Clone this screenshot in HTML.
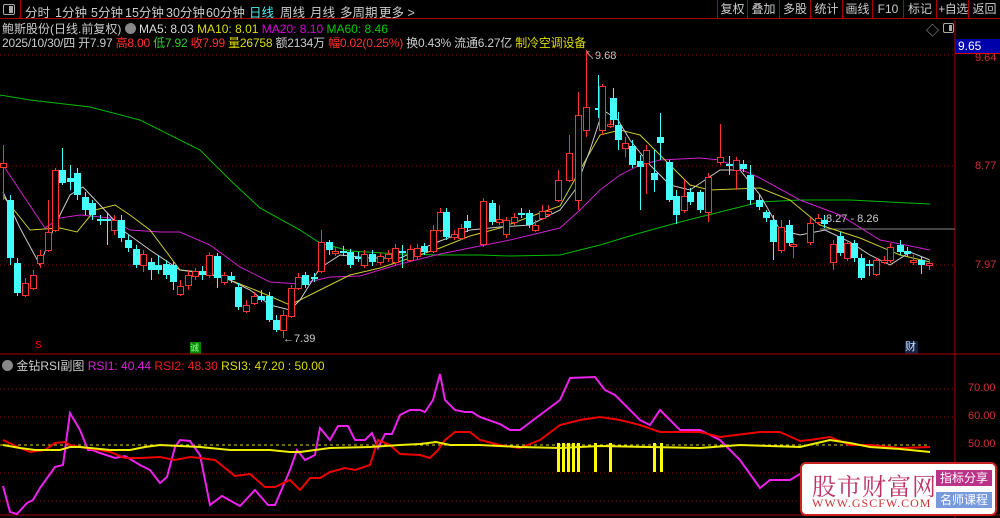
<!DOCTYPE html>
<html><head><meta charset="utf-8"><style>
*{margin:0;padding:0;box-sizing:border-box}
body{width:1000px;height:518px;background:#000;overflow:hidden;position:relative;font-family:"Liberation Sans","Noto Sans CJK SC",sans-serif;font-size:12px;color:#ccc}
.a{position:absolute;white-space:nowrap}
#tb{position:absolute;left:0;top:0;width:1000px;height:19px;border-bottom:1px solid #a00}
#tb span{position:absolute;top:2px;font-size:12.5px;color:#ccc;white-space:nowrap}
.btn{position:absolute;top:0;height:19px;border-left:1px solid #a00;color:#ccc;font-size:12px;text-align:center;line-height:19px;white-space:nowrap;overflow:hidden}
</style></head><body>
<div id="tb">
<div class="a" style="left:3px;top:4px;width:12px;height:11px;border:1px solid #aaa;border-radius:2px"><div style="position:absolute;right:1px;top:1px;width:4px;height:7px;background:#aaa"></div></div>
<div class="a" style="left:20px;top:0;width:1px;height:19px;background:#a00"></div>
<span style="left:25px">分时</span><span style="left:55px">1分钟</span><span style="left:91px">5分钟</span><span style="left:125px">15分钟</span><span style="left:166px">30分钟</span><span style="left:206px">60分钟</span><span style="left:249px;color:#5ee">日线</span><span style="left:280px">周线</span><span style="left:310px">月线</span><span style="left:340px">多周期</span><span style="left:379px">更多 &gt;</span>
<div class="btn" style="left:717px;width:30px">复权</div><div class="btn" style="left:747px;width:32px">叠加</div><div class="btn" style="left:779px;width:31px">多股</div><div class="btn" style="left:810px;width:32px">统计</div><div class="btn" style="left:842px;width:30px">画线</div><div class="btn" style="left:872px;width:31px">F10</div><div class="btn" style="left:903px;width:33px">标记</div><div class="btn" style="left:936px;width:33px;letter-spacing:-0.5px">+自选</div><div class="btn" style="left:968px;width:32px">返回</div>
</div>
<div class="a" style="left:2px;top:20px;font-size:12px"><span style="color:#ccc">鲍斯股份(日线.前复权)</span> <span style="display:inline-block;width:11px;height:11px;border-radius:50%;background:#888;vertical-align:-1px"></span> <span style="color:#ddd">MA5: 8.03</span> <span style="color:#dd0">MA10: 8.01</span> <span style="color:#d0d">MA20: 8.10</span> <span style="color:#0c0">MA60: 8.46</span></div>
<div class="a" style="left:2px;top:34px;font-size:12px;letter-spacing:-0.2px"><span>2025/10/30/四 开7.97 </span><span style="color:#f33">高8.00 </span><span style="color:#3c3">低7.92 </span><span style="color:#f33">收7.99 </span><span style="color:#dd0">量26758 </span><span>额2134万 </span><span style="color:#f33">幅0.02(0.25%) </span><span>换0.43% 流通6.27亿 </span><span style="color:#dd0">制冷空调设备</span></div>
<div class="a" style="left:926px;top:20px;color:#aaa;font-size:13px">◇</div>
<div class="a" style="left:943px;top:23px;width:11px;height:10px;border:1px solid #aaa;border-radius:2px"><div style="position:absolute;right:1px;top:1px;width:3px;height:6px;background:#aaa"></div></div>
<div class="a" style="left:955px;top:39px;width:45px;height:15px;background:#00a;border-bottom:1px solid #d00;color:#fff;font-size:12px;padding-left:3px">9.65</div>
<div class="a" style="left:975px;top:52px;color:#c33;font-size:11px">9.64</div>
<div class="a" style="left:975px;top:160px;color:#c33;font-size:11px">8.77</div>
<div class="a" style="left:975px;top:259px;color:#c33;font-size:11px">7.97</div>
<div class="a" style="left:968px;top:382px;color:#c33;font-size:11px">70.00</div>
<div class="a" style="left:968px;top:410px;color:#c33;font-size:11px">60.00</div>
<div class="a" style="left:968px;top:438px;color:#c33;font-size:11px">50.00</div>
<div class="a" style="left:2px;top:357px;font-size:12px"><span style="display:inline-block;width:11px;height:11px;border-radius:50%;background:#888;vertical-align:-1px"></span> <span>金钻RSI副图</span> <span style="color:#d2d">RSI1: 40.44</span> <span style="color:#e22">RSI2: 48.30</span> <span style="color:#dd0">RSI3: 47.20 : 50.00</span></div>
<div class="a" style="left:35px;top:340px;color:#f00;font-size:10px">S</div>
<div class="a" style="left:190px;top:342px;width:11px;height:12px;background:#080;color:#9f9;font-size:9px;line-height:12px">诚</div>
<div class="a" style="left:905px;top:341px;width:13px;height:13px;background:#124;color:#cdf;font-size:11px;line-height:13px">财</div>
<div class="a" style="left:584px;top:47px;color:#ccc;font-size:11px">↖9.68</div>
<div class="a" style="left:283px;top:333px;color:#ccc;font-size:11px">←7.39</div>
<div class="a" style="left:826px;top:213px;color:#ccc;font-size:11px">8.27 - 8.26</div>
<svg class="a" style="left:0;top:0" width="1000" height="518" id="sv">
<g stroke="#a00" stroke-width="1" stroke-dasharray="1,3"><line x1="0" y1="55" x2="955" y2="55"/><line x1="0" y1="166" x2="955" y2="166"/><line x1="0" y1="265" x2="955" y2="265"/><line x1="0" y1="389" x2="955" y2="389"/><line x1="0" y1="417" x2="955" y2="417"/><line x1="0" y1="473" x2="955" y2="473"/><line x1="0" y1="501" x2="955" y2="501"/></g>
<line x1="0" y1="445" x2="930" y2="445" stroke="#dd0" stroke-dasharray="3,3"/>
<line x1="955" y1="20" x2="955" y2="518" stroke="#a00"/>
<line x1="0" y1="354" x2="1000" y2="354" stroke="#a00"/>
<line x1="0" y1="515" x2="1000" y2="515" stroke="#a00"/>
<line x1="820" y1="229" x2="955" y2="229" stroke="#888"/>
<g fill="none" stroke-width="1">
<polyline stroke="#0b0" points="0,95 30,100 90,107 140,120 200,150 230,180 260,208 300,230 320,243 350,251 400,254 440,255 480,255 510,256 560,255 600,245 640,233 680,222 720,212 760,202 800,200 850,200 930,204"/>
<polyline stroke="#c2c" points="3,165 45,228 60,218 80,215 110,218 130,230 160,232 180,232 210,245 240,267 270,282 300,284 330,277 360,276 400,264 440,254 460,250 480,246 510,240 560,228 580,210 600,190 620,175 640,165 660,160 700,158 720,160 760,178 800,200 840,215 880,240 930,250"/>
<polyline stroke="#cc3" points="3,196 30,230 60,228 77,232 95,210 115,205 130,215 150,230 180,270 210,274 230,280 260,292 290,305 320,290 350,275 380,268 410,258 440,248 470,236 500,228 540,213 560,206 580,170 600,135 620,130 640,135 660,155 690,185 710,190 760,188 790,200 820,225 860,238 900,255 930,262"/>
<polyline stroke="#ccc" points="3,192 20,228 40,265 55,225 70,195 83,187 100,205 125,232 150,250 180,270 200,272 230,280 250,290 270,305 290,310 300,300 320,268 340,255 370,258 400,258 440,241 470,230 500,227 530,225 560,210 575,190 590,150 603,110 618,120 630,140 650,165 670,185 690,190 720,170 740,170 760,195 780,230 800,235 825,230 850,242 870,255 890,265 910,252 930,260"/>
</g>
<g id="cd"></g>
<g fill="#ff0"><rect x="557" y="443" width="3" height="29"/><rect x="562" y="443" width="3" height="29"/><rect x="567" y="443" width="3" height="29"/><rect x="572" y="443" width="3" height="29"/><rect x="577" y="443" width="3" height="29"/><rect x="594" y="443" width="3" height="29"/><rect x="609" y="443" width="3" height="29"/><rect x="653" y="443" width="3" height="29"/><rect x="660" y="443" width="3" height="29"/></g>
<g fill="none" stroke-width="2">
<polyline stroke="#e2e" points="3,486 10,512 17,514 27,503 33,500 40,488 55,467 63,465 70,413 80,430 88,450 92,450 100,453 115,458 125,456 140,465 150,470 160,483 167,477 175,447 180,440 190,441 200,455 210,505 222,496 240,506 255,490 268,505 275,505 290,470 297,450 305,460 315,455 320,428 330,440 338,426 348,426 355,440 365,440 372,433 378,448 385,434 392,434 400,415 410,410 420,410 425,412 433,400 440,374 445,400 455,410 465,412 472,412 480,417 500,424 510,430 520,430 540,415 560,400 570,378 595,377 605,390 615,395 630,410 640,420 650,425 660,410 670,420 680,430 700,430 720,440 740,460 760,488 770,480 790,480 810,468"/>
<polyline stroke="#e00" points="3,440 20,448 30,452 45,450 55,443 65,442 70,445 80,447 100,450 110,452 125,458 140,458 160,457 175,460 190,457 200,458 215,460 235,476 250,474 265,487 275,487 290,480 300,490 310,478 320,478 330,472 345,468 355,470 370,465 378,440 390,445 400,454 420,455 430,458 438,450 445,440 455,432 470,432 480,440 500,445 520,448 540,440 560,425 580,420 600,417 620,420 640,425 660,432 680,432 700,432 720,437 760,432 780,432 800,441 810,440 830,437 850,445 870,445 900,448 930,447"/>
<polyline stroke="#ee0" points="3,445 20,448 35,450 60,450 70,447 80,447 110,450 130,450 145,447 160,445 200,447 230,450 270,450 290,452 300,452 315,450 330,448 370,447 400,445 420,444 436,442 450,445 480,445 520,447 560,448 600,446 650,447 700,448 740,445 800,447 830,440 850,443 870,447 900,449 930,452"/>
</g>
</svg>
<div class="a" style="left:800px;top:462px;width:197px;height:54px;background:#fff;border:2px solid #c22;border-radius:6px">
<div class="a" style="left:10px;top:3px;font-size:24px;color:#b36;font-family:'Noto Serif CJK SC',serif;letter-spacing:1px">股市财富网</div>
<div class="a" style="left:10px;top:32px;font-size:12px;color:#c33;font-family:'Liberation Serif',serif;letter-spacing:1px">WWW.GSCFW.COM</div>
<div class="a" style="left:134px;top:6px;width:56px;height:16px;background:#b38;color:#fff;font-size:12px;text-align:center;line-height:16px">指标分享</div>
<div class="a" style="left:134px;top:28px;width:56px;height:16px;background:#79d;color:#fff;font-size:12px;text-align:center;line-height:16px">名师课程</div>
</div>
<script>
var d=[[3,163,167,0,145,200],[10,200,258,1,195,265],[17,263,293,1,258,296],[25,283,295,0,278,297],[33,275,288,0,270,290],[40,255,263,0,250,268],[48,232,250,0,200,252],[55,170,230,0,168,232],[62,170,183,1,148,185],[70,178,182,1,165,190],[77,173,195,1,168,200],[85,197,210,1,192,215],[92,203,215,1,200,220],[100,219,221,1,215,225],[107,219,221,1,213,245],[114,220,230,0,215,235],[121,220,238,1,215,242],[128,240,248,1,235,252],[136,249,265,1,245,268],[143,254,265,0,250,272],[151,262,270,1,258,280],[158,265,270,1,255,274],[166,264,275,1,260,279],[173,265,282,1,262,290],[180,286,294,0,280,296],[188,275,285,0,270,290],[195,271,276,0,268,280],[202,271,275,1,266,280],[209,255,275,0,252,278],[217,256,278,1,253,288],[224,275,282,0,272,285],[231,276,280,1,272,283],[238,287,307,1,283,310],[246,305,311,0,300,313],[254,296,303,0,292,305],[261,296,300,1,290,302],[269,296,320,1,292,322],[276,320,330,1,315,332],[283,315,330,0,310,338],[291,288,316,0,285,318],[298,277,288,0,273,290],[305,275,285,1,272,288],[314,277,279,1,273,282],[321,242,271,0,230,273],[329,242,250,1,240,255],[335,251,253,0,247,256],[343,251,253,1,246,256],[350,252,265,1,249,268],[358,257,259,1,252,262],[364,254,265,0,250,268],[372,254,262,1,250,266],[380,256,262,0,253,265],[388,254,258,0,250,262],[395,248,262,0,244,265],[402,251,253,1,245,268],[410,249,260,0,245,262],[417,248,256,0,244,260],[424,246,252,1,243,255],[433,230,251,0,225,253],[440,212,230,0,208,232],[446,212,237,1,208,240],[454,234,237,0,230,240],[461,228,238,0,224,240],[467,221,228,1,215,232],[483,201,244,0,198,247],[492,203,222,1,200,225],[499,219,222,0,205,225],[506,220,234,0,217,238],[514,217,222,0,213,225],[521,213,215,1,208,218],[529,213,225,1,210,228],[535,225,230,0,220,232],[542,211,218,0,205,220],[548,211,214,0,205,217],[558,180,200,0,170,202],[569,153,180,0,135,182],[578,115,200,0,92,210],[586,107,130,0,50,137],[598,108,110,1,75,118],[602,86,130,0,84,135],[610,124,126,0,115,128],[613,98,120,1,88,125],[618,125,140,1,112,150],[625,143,148,0,137,157],[632,146,165,1,140,168],[640,161,167,1,155,210],[646,150,163,0,145,194],[654,173,180,1,150,192],[660,137,143,1,113,160],[669,162,200,1,160,202],[676,196,215,1,190,224],[684,196,210,0,180,213],[690,192,202,1,188,205],[700,192,210,1,190,213],[708,177,212,0,173,222],[720,157,162,0,124,165],[729,164,166,1,156,175],[736,160,170,0,157,190],[743,164,169,1,160,172],[750,175,200,1,165,205],[759,200,207,1,195,210],[766,212,218,1,210,222],[773,220,242,1,215,260],[781,227,250,0,220,253],[789,225,243,1,220,246],[793,244,246,0,238,258],[810,223,242,0,218,245],[818,218,222,0,214,225],[824,220,224,1,215,228],[833,244,262,0,240,270],[840,236,253,1,232,256],[847,243,258,0,240,261],[854,243,258,1,240,262],[861,258,278,1,254,280],[869,264,266,1,260,276],[876,260,274,0,258,276],[884,260,262,0,256,264],[890,247,260,0,243,263],[900,245,252,1,240,255],[907,251,254,1,247,257],[913,260,262,0,255,265],[921,260,265,1,256,274],[929,263,265,0,259,270]];
var s='';d.forEach(function(c){var col=c[3]?'#4ff':'#f33';s+='<line x1="'+(c[0]+.5)+'" x2="'+(c[0]+.5)+'" y1="'+c[4]+'" y2="'+c[5]+'" stroke="'+col+'"/>';var h=Math.max(c[2]-c[1],1);if(c[3])s+='<rect x="'+(c[0]-3)+'" y="'+c[1]+'" width="7" height="'+h+'" fill="#4ff"/>';else s+='<rect x="'+(c[0]-2.5)+'" y="'+(c[1]+.5)+'" width="6" height="'+h+'" fill="#000" stroke="#f33"/>';});
document.getElementById('cd').innerHTML=s;
</script>
</body></html>
